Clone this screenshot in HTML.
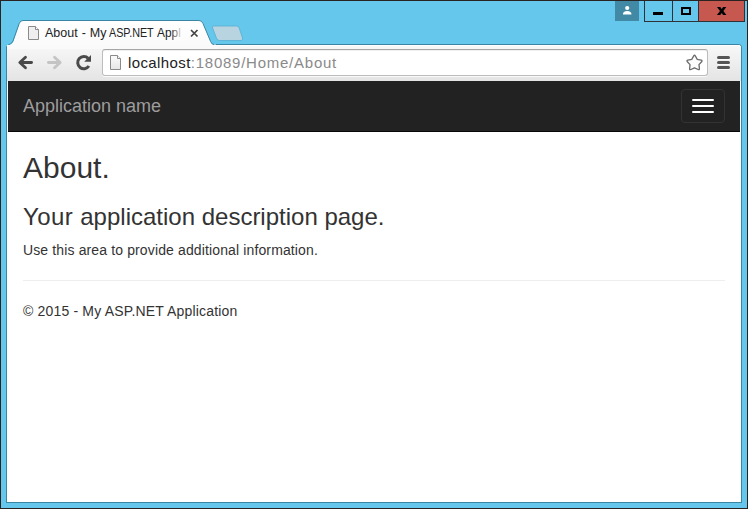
<!DOCTYPE html>
<html>
<head>
<meta charset="utf-8">
<title>About - My ASP.NET Application</title>
<style>
html,body{margin:0;padding:0;}
body{width:748px;height:509px;overflow:hidden;background:#65c7eb;font-family:"Liberation Sans",sans-serif;position:relative;}
.abs{position:absolute;}
#frame{left:0;top:0;width:746px;height:507px;border:1px solid #2b2322;}
/* caption buttons */
#user{left:615px;top:1px;width:24px;height:20px;background:#4189a5;}
#capbox{left:644px;top:1px;width:99px;height:20px;border:1px solid #2e3238;border-top:none;}
#cap-d1{left:672px;top:1px;width:1px;height:20px;background:#2e3238;}
#cap-d2{left:698px;top:1px;width:1px;height:20px;background:#2e3238;}
#close{left:699px;top:1px;width:45px;height:20px;background:#c75850;}
#min{left:653px;top:12px;width:10px;height:3px;background:#000;}
#max{left:681px;top:7px;width:6px;height:4px;border:2px solid #000;}
/* client */
#ifL{left:6px;top:47px;width:1px;height:456px;background:#3b87a3;}
#ifB{left:6px;top:502px;width:736px;height:1px;background:#3b87a3;}
#ifR{left:741px;top:50px;width:1px;height:453px;background:#3b87a3;}
#tealtop{left:213px;top:44px;width:528px;height:8px;border-top:1px solid #3b87a3;border-right:1px solid #3b87a3;border-radius:0 4px 0 0;}
#client{left:7px;top:45px;width:734px;height:457px;background:#fff;}
#toolbar{left:7px;top:45px;width:734px;height:36px;background:linear-gradient(#f8f8f8,#e4e4e4);border-radius:0 3px 0 0;box-shadow:inset 0 1px 0 #fff;}
#omni{left:102px;top:49px;width:604px;height:25px;border:1px solid #bcbcbc;border-top-color:#a6a6a6;border-radius:3px;background:#fff;box-shadow:0 1px 0 rgba(255,255,255,.8),inset 0 1px 0 #f0f0f0;}
#url{left:128px;top:52px;font-size:15px;line-height:22px;color:#222;white-space:nowrap;letter-spacing:0.4px;}
#url span{color:#8a8a8a;letter-spacing:0.75px;}
#tabtitle{left:45px;top:25px;width:137px;height:16px;overflow:hidden;font-size:12.5px;line-height:16px;color:#222;white-space:nowrap;}
#tabtitle b{font-weight:normal;position:absolute;top:0;transform-origin:0 0;}
#tabfade{left:171px;top:25px;width:12px;height:16px;background:linear-gradient(90deg,rgba(253,253,253,0),#fdfdfd);}
/* page */
#page{left:8px;top:81px;width:732px;height:421px;background:#fff;overflow:hidden;}
#navbar{left:0;top:0;width:732px;height:50px;background:#222;border-bottom:1px solid #080808;}
#brand{left:15px;top:15px;font-size:18px;line-height:20px;color:#9d9d9d;white-space:nowrap;}
#toggle{left:673px;top:8px;width:42px;height:32px;border:1px solid #333;border-radius:4px;}
#toggle i{position:absolute;left:10px;width:22px;height:2px;border-radius:1px;background:#fff;}
#content{left:15px;top:50px;width:702px;color:#333;font-size:14px;line-height:20px;}
#content h2{font-weight:500;font-size:30px;line-height:33px;margin:20px 0 10px;}
#content h3{font-weight:500;font-size:24px;line-height:26.4px;margin:20px 0 10px;white-space:nowrap;}
#content h3 span{letter-spacing:0.42px;}
#content p{margin:0 0 10px;letter-spacing:0.13px;white-space:nowrap;}
#content p.ft{letter-spacing:0.175px;}
#content hr{margin:20px 0;border:0;border-top:1px solid #eee;height:0;}
</style>
</head>
<body>
<div class="abs" id="frame"></div>

<!-- caption buttons -->
<div class="abs" id="user"></div>
<svg class="abs" style="left:615px;top:1px" width="24" height="20" viewBox="0 0 24 20"><circle cx="12.2" cy="7" r="2.1" fill="#fff"/><path d="M7.9 13.5 C7.9 11.2 9.3 10 12.2 10 C15.1 10 16.5 11.2 16.5 13.5 Z" fill="#fff"/></svg>
<div class="abs" id="close"></div>
<div class="abs" id="capbox"></div>
<div class="abs" id="cap-d1"></div>
<div class="abs" id="cap-d2"></div>
<div class="abs" id="min"></div>
<div class="abs" id="max"></div>
<svg class="abs" style="left:716px;top:6px" width="12" height="10" viewBox="0 0 12 10"><path d="M1 1 L4.3 1 L5.7 3.1 L7.1 1 L10.3 1 L7.4 5 L10.4 9.1 L7.1 9.1 L5.7 6.9 L4.3 9.1 L0.9 9.1 L4 5 Z" fill="#000"/></svg>

<!-- client area -->
<div class="abs" id="client"></div>
<div class="abs" id="ifL"></div><div class="abs" id="ifB"></div><div class="abs" id="ifR"></div>
<div class="abs" id="tealtop"></div>
<div class="abs" id="toolbar"></div>

<!-- tab strip shapes -->
<svg class="abs" style="left:0;top:0" width="748" height="82" viewBox="0 0 748 82">
  <defs>
    <linearGradient id="tabg" x1="0" y1="0" x2="0" y2="1"><stop offset="0" stop-color="#ffffff"/><stop offset="1" stop-color="#fafafa"/></linearGradient>
  </defs>
  <!-- new tab button -->
  <path d="M213.5 26 L236.5 26 Q238.5 26 239.2 28 L242.5 38 Q243 40.5 241 40.5 L219.5 40.5 Q217.5 40.5 216.6 38.5 L212.6 28 Q212 26 213.5 26 Z" fill="#b9d4e1" stroke="#55aed0" stroke-width="0.8"/>
  <!-- active tab -->
  <path d="M7 49 L7 47.6 Q7 46 8.5 45.3 L11 44 Q12.7 43.2 13.4 41.2 L19.4 23.5 Q20.3 20.5 23 20.5 L199 20.5 Q201.8 20.5 203 23.5 L210.6 41.5 Q211.6 44.5 214 44.5 L216 44.5 L216 48 Z" fill="url(#tabg)"/>
  <path d="M6.5 49 L6.5 47.6 Q6.5 45.8 8.3 44.9 L10.8 43.6 Q12.4 42.8 13 41 L19.2 23.5 Q20.3 20.5 23 20.5 L199 20.5 Q201.8 20.5 203 23.5 L210.6 41.5 Q211.6 44.5 214 44.5" fill="none" stroke="#3b87a3" stroke-width="1"/>
  <rect x="7" y="45" width="211" height="4" fill="#fafafa"/>
  <!-- tab page icon -->
  <path d="M28.5 26.5 L35.5 26.5 L38.5 29.5 L38.5 39.5 L28.5 39.5 Z" fill="#efefef" stroke="#8a8a8a" stroke-width="1"/>
  <path d="M35.5 26.5 L35.5 29.5 L38.5 29.5" fill="#fff" stroke="#8a8a8a" stroke-width="1"/>
  <!-- tab close -->
  <path d="M191 30 L197.5 36.5 M197.5 30 L191 36.5" stroke="#444" stroke-width="1.7" fill="none"/>
  <!-- back arrow -->
  <path d="M25.5 57.2 L19.8 62.5 L25.5 67.8 M20.5 62.5 L31.6 62.5" stroke="#4a4a4a" stroke-width="2.8" stroke-linecap="round" stroke-linejoin="round" fill="none"/>
  <!-- forward arrow -->
  <path d="M54.5 57.2 L60.2 62.5 L54.5 67.8 M59.5 62.5 L48.4 62.5" stroke="#c4c4c4" stroke-width="2.8" stroke-linecap="round" stroke-linejoin="round" fill="none"/>
  <!-- reload -->
  <path d="M88.9 66 A6.1 6.1 0 1 1 88.2 58.4" stroke="#4a4a4a" stroke-width="3" fill="none"/>
  <path d="M91 55 L91 61.8 L84.2 61.8 Z" fill="#4a4a4a"/>
</svg>
<div class="abs" id="tabtitle"><b style="left:0;word-spacing:0.5px">About - My</b><b style="left:64.4px;transform:scaleX(0.861)">ASP.NET</b><b style="left:112.2px;transform:scaleX(0.95)">Appl</b></div>
<div class="abs" id="tabfade"></div>

<div class="abs" id="omni"></div>
<svg class="abs" style="left:109px;top:54px" width="14" height="17" viewBox="0 0 14 17">
  <defs><linearGradient id="pg" x1="0" y1="0" x2="0" y2="1"><stop offset="0" stop-color="#fbfbfb"/><stop offset="1" stop-color="#e6e6e6"/></linearGradient></defs>
  <path d="M1.5 1.5 L8.5 1.5 L11.5 4.5 L11.5 15.5 L1.5 15.5 Z" fill="url(#pg)" stroke="#8a8a8a" stroke-width="1"/>
  <path d="M8.5 1.5 L8.5 4.5 L11.5 4.5" fill="#fff" stroke="#8a8a8a" stroke-width="1"/>
</svg>
<div class="abs" id="url">localhost<span>:18089/Home/About</span></div>
<!-- star -->
<svg class="abs" style="left:685px;top:53px" width="19" height="19" viewBox="0 0 19 19">
  <path d="M8.73 2.94 Q9.50 1.60 10.27 2.94 L12.26 6.40 L16.16 7.22 Q17.68 7.54 16.64 8.69 L13.97 11.65 L14.39 15.62 Q14.55 17.16 13.14 16.53 L9.50 14.90 L5.86 16.53 Q4.45 17.16 4.61 15.62 L5.03 11.65 L2.36 8.69 Q1.32 7.54 2.84 7.22 L6.74 6.40 Z" fill="#fdfdfd" stroke="#6b6b6b" stroke-width="1.3" stroke-linejoin="round"/>
</svg>
<!-- menu -->
<svg class="abs" style="left:716px;top:55px" width="16" height="16" viewBox="0 0 16 16">
  <g fill="#fff" opacity="0.75"><rect x="1" y="2" width="13" height="3" rx="1.5"/><rect x="1" y="7" width="13" height="3" rx="1.5"/><rect x="1" y="12" width="13" height="3" rx="1.5"/></g>
  <g fill="#565656"><rect x="1" y="1" width="13" height="3" rx="1.5"/><rect x="1" y="6" width="13" height="3" rx="1.5"/><rect x="1" y="11" width="13" height="3" rx="1.5"/></g>
</svg>

<!-- page -->
<div class="abs" id="page">
  <div class="abs" id="navbar">
    <div class="abs" id="brand">Application name</div>
    <div class="abs" id="toggle"><i style="top:9px"></i><i style="top:15px"></i><i style="top:21px"></i></div>
  </div>
  <div class="abs" id="content">
    <h2>About.</h2>
    <h3><span>Your </span>application description page.</h3>
    <p>Use this area to provide additional information.</p>
    <hr>
    <p class="ft">&copy; 2015 - My ASP.NET Application</p>
  </div>
</div>
</body>
</html>
